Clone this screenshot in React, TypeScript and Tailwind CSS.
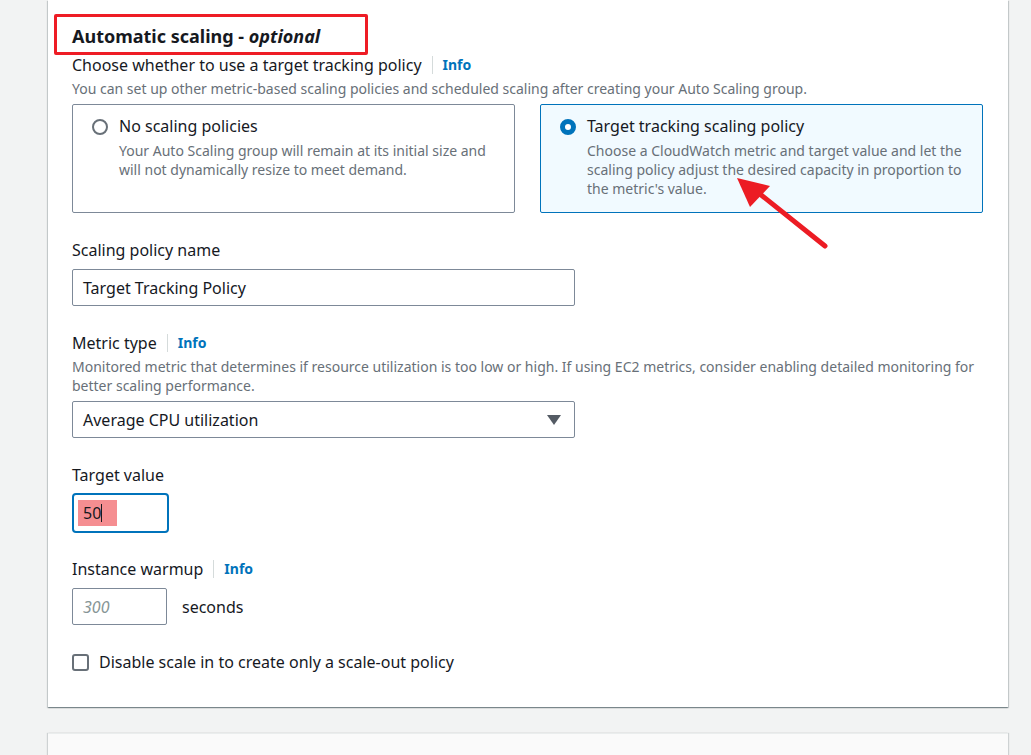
import React from 'react';

const font = { fontFamily: '"Noto Sans", "Open Sans", Arial, sans-serif' };

function InfoLink() {
  return (
    <span className="ml-[10px] border-l border-[#d5dbdb] pl-[10px] text-[14px] font-bold leading-[18px] text-[#0073bb]">
      Info
    </span>
  );
}

function Label({ children, info }: { children: React.ReactNode; info?: boolean }) {
  return (
    <div className="flex items-center text-[16px] leading-[22px] text-[#16191f]">
      <span>{children}</span>
      {info && <InfoLink />}
    </div>
  );
}

function Tile({
  selected,
  title,
  lines,
}: {
  selected?: boolean;
  title: string;
  lines: string[];
}) {
  return (
    <div
      className={`h-[109px] rounded-[2px] border pl-[19px] pr-[19px] pt-[10px] ${
        selected ? 'border-[#0073bb] bg-[#f1faff]' : 'border-[#7d8998] bg-white'
      }`}
    >
      <div className="flex">
        <div className="pt-[4px]">
          {selected ? (
            <div className="h-[16px] w-[16px] rounded-full border-[5px] border-[#0073bb] bg-white" />
          ) : (
            <div className="h-[16px] w-[16px] rounded-full border-2 border-[#687078] bg-white" />
          )}
        </div>
        <div className="ml-[11px]">
          <div className="text-[16px] leading-[22px] text-[#16191f]">{title}</div>
          <div className="mt-[4px] text-[14px] leading-[19px] text-[#687078]">
            {lines.map((l) => (
              <div key={l}>{l}</div>
            ))}
          </div>
        </div>
      </div>
    </div>
  );
}

export default function App() {
  return (
    <div className="relative min-h-[755px] overflow-hidden bg-[#f2f3f3]" style={font}>
      <div className="ml-[48px] w-[960px] bg-white px-6 pb-[34px] pt-[14px] shadow-[0_1px_1px_0_rgba(0,28,36,0.3),1px_1px_1px_0_rgba(0,28,36,0.15),-1px_1px_1px_0_rgba(0,28,36,0.15)]">
        <div className="-ml-[18px] flex h-[41px] w-[314px] items-center rounded-[2px] border-[3px] border-[#ee1c25] pl-[15px] pt-[3px]">
          <h2 className="text-[18px] font-bold leading-[22px] text-[#16191f]">
            Automatic scaling - <span className="font-bold italic">optional</span>
          </h2>
        </div>

        <div className="flex items-center leading-[20px]">
          <span className="text-[16px] text-[#16191f]">Choose whether to use a target tracking policy</span>
          <InfoLink />
        </div>
        <div className="mt-[4px] text-[14px] leading-[20px] text-[#687078]">
          You can set up other metric-based scaling policies and scheduled scaling after creating your Auto Scaling group.
        </div>

        <div className="mt-[5px] grid w-[911px] grid-cols-2 gap-[25px]">
          <Tile
            title="No scaling policies"
            lines={[
              'Your Auto Scaling group will remain at its initial size and',
              'will not dynamically resize to meet demand.',
            ]}
          />
          <Tile
            selected
            title="Target tracking scaling policy"
            lines={[
              'Choose a CloudWatch metric and target value and let the',
              'scaling policy adjust the desired capacity in proportion to',
              "the metric's value.",
            ]}
          />
        </div>

        <div className="mt-[26px]">
          <Label>Scaling policy name</Label>
          <div className="mt-[8px] flex h-[37px] w-[503px] items-center rounded-[2px] border border-[#7d8998] px-[10px] text-[16px] text-[#16191f]">
            Target Tracking Policy
          </div>
        </div>

        <div className="mt-[26px]">
          <Label info>Metric type</Label>
          <div className="mt-[3px] text-[14px] leading-[19px] text-[#687078]">
            Monitored metric that determines if resource utilization is too low or high. If using EC2 metrics, consider enabling detailed monitoring for
            <br />
            better scaling performance.
          </div>
          <div className="mt-[6px] flex h-[37px] w-[503px] items-center justify-between rounded-[2px] border border-[#7d8998] pl-[10px] pr-[13px] text-[16px] text-[#16191f]">
            <span>Average CPU utilization</span>
            <svg width="14" height="10" viewBox="0 0 14 10">
              <path d="M0 0 H14 L7 10 Z" fill="#545b64" />
            </svg>
          </div>
        </div>

        <div className="mt-[26px]">
          <Label>Target value</Label>
          <div className="mt-[7px] flex h-[40px] w-[97px] items-center rounded-[4px] border-2 border-[#0073bb] pl-[4px]">
            <div className="flex h-[26px] w-[39px] items-center bg-[#f58e91] pl-[5px] text-[16px] text-[#16191f]">
              <span>50</span>
              <span className="h-[18px] w-px bg-[#16191f]" />
            </div>
          </div>
        </div>

        <div className="mt-[25px]">
          <Label info>Instance warmup</Label>
          <div className="mt-[8px] flex items-center">
            <div className="flex h-[37px] w-[95px] items-center rounded-[2px] border border-[#7d8998] px-[10px] text-[16px] italic text-[#879596]">
              300
            </div>
            <span className="ml-[15px] text-[16px] text-[#16191f]">seconds</span>
          </div>
        </div>

        <div className="mt-[26px] flex items-center">
          <div className="h-[17px] w-[17px] rounded-[3px] border-2 border-[#687078] bg-white" />
          <span className="ml-[10px] text-[16px] leading-[22px] text-[#16191f]">
            Disable scale in to create only a scale-out policy
          </span>
        </div>
      </div>

      <div className="ml-[48px] mt-[26px] h-[40px] w-[960px] border-t border-[#eaeded] bg-[#fafafa] shadow-[1px_0_1px_0_rgba(0,28,36,0.15),-1px_0_1px_0_rgba(0,28,36,0.15)]" />

      <svg className="pointer-events-none absolute left-0 top-0" width="1031" height="755">
        <line x1="825" y1="246" x2="755" y2="190" stroke="#ec1c24" strokeWidth="5" strokeLinecap="round" />
        <path d="M737 178 L770 186 L750 207 Z" fill="#ec1c24" />
      </svg>
    </div>
  );
}
